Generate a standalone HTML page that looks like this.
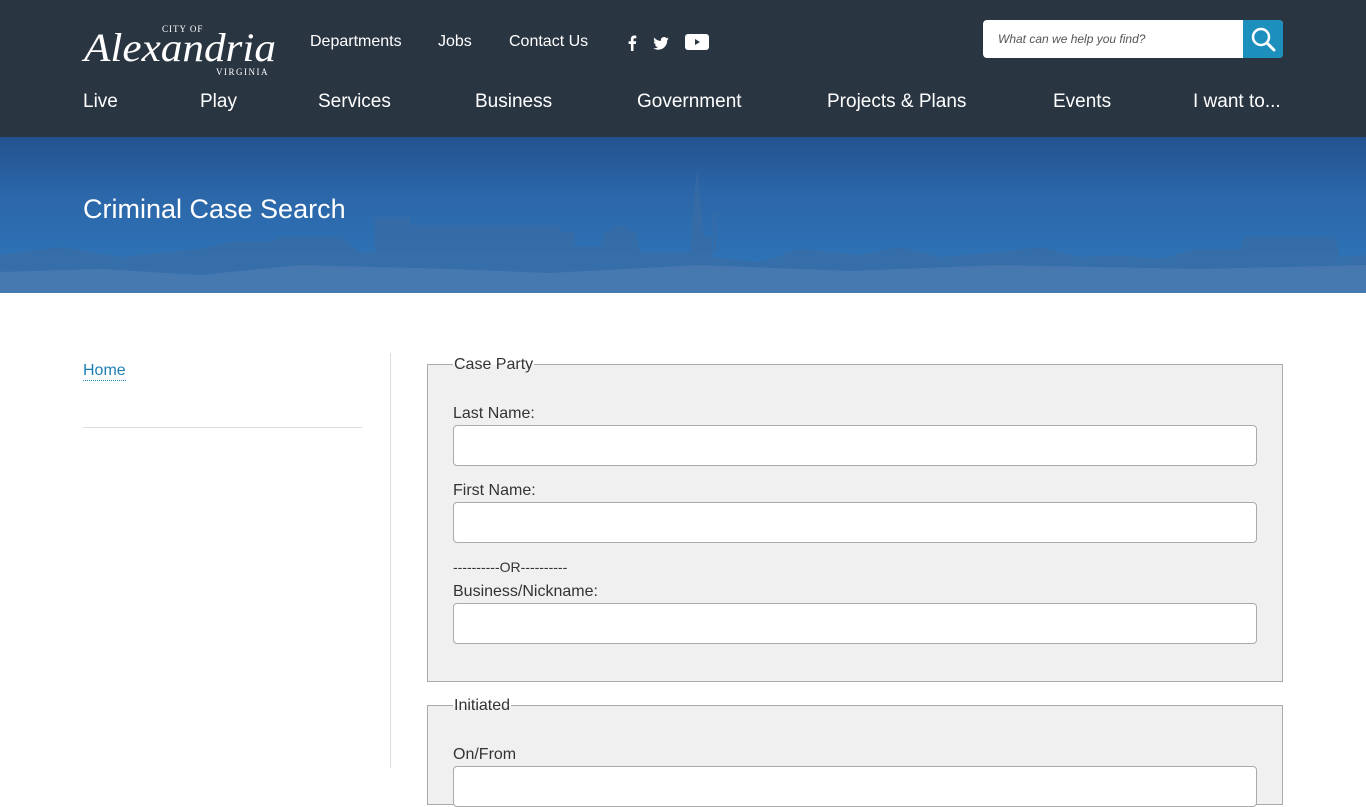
<!DOCTYPE html>
<html><head><meta charset="utf-8">
<style>
*{box-sizing:border-box;margin:0;padding:0}
body{width:1366px;height:768px;overflow:hidden;font-family:"Liberation Sans",sans-serif;background:#fff;color:#333}
.hdr{position:absolute;left:0;top:0;width:1366px;height:137px;background:#2a3542}
.logo{position:absolute;left:84px;top:10px;color:#fff;width:195px;height:68px}
.logo .main{font-family:"Liberation Serif",serif;font-style:italic;font-size:40px;position:absolute;left:0;top:14px;white-space:nowrap;transform:scaleX(1.08);transform-origin:left}
.logo .city{position:absolute;left:78px;top:14px;font-family:"Liberation Serif",serif;font-size:9px;letter-spacing:1px;white-space:nowrap}
.logo .va{position:absolute;left:132px;top:57px;font-family:"Liberation Serif",serif;font-size:9px;letter-spacing:1.5px;white-space:nowrap}
.top a{position:absolute;top:33px;color:#fff;font-size:16px;text-decoration:none}
.nav a{position:absolute;top:91px;color:#fff;font-size:19px;text-decoration:none}
.search{position:absolute;left:983px;top:20px;width:300px;height:38px;background:#fff;border-radius:4px;overflow:hidden}
.search span{position:absolute;left:15px;top:12px;font-size:12px;font-style:italic;color:#555}
.search .btn{position:absolute;right:0;top:0;width:40px;height:38px;background:#1d8fbd}
.banner{position:absolute;left:0;top:137px;width:1366px;height:156px;background:linear-gradient(180deg,#24528f 0%,#2b66a8 35%,#2f79bd 100%);overflow:hidden}
.banner h1{position:absolute;left:83px;top:57px;color:#fff;font-weight:normal;font-size:27px}
.side{position:absolute;left:83px;top:361px;font-size:16px;color:#1c7fb4;border-bottom:1px dotted #1c7fb4;line-height:19px}
.sline{position:absolute;left:83px;top:427px;width:279px;height:1px;background:#ddd}
.vline{position:absolute;left:390px;top:353px;width:1px;height:415px;background:#ddd}
.fs{position:absolute;left:427px;width:856px;background:#f0f0f0;border:1px solid #aaa}
.leg{position:absolute;left:25px;top:-9px;background:linear-gradient(#fff 50%,#f0f0f0 50%);font-size:16px;color:#333;padding:0 1px;line-height:18px}
.lab{position:absolute;left:25px;font-size:16px;color:#333}
.inp{position:absolute;left:25px;width:804px;height:41px;background:#fff;border:1px solid #aaa;border-radius:4px}
</style></head><body>
<div class="hdr">
  <div class="logo"><div class="city">CITY OF</div><div class="main">Alexandria</div><div class="va">VIRGINIA</div></div>
  <div class="top"><a style="left:310px">Departments</a><a style="left:438px">Jobs</a><a style="left:509px">Contact Us</a></div>
  <svg style="position:absolute;left:627px;top:35px" width="10" height="16" viewBox="0 0 10 16"><path d="M6.5 16V9h2.3l.4-2.8H6.5V4.5c0-.8.3-1.3 1.4-1.3H9.3V.7C9 .6 8.2.5 7.3.5 5.3.5 3.9 1.7 3.9 3.9v2.3H1.6V9h2.3v7z" fill="#fff"/></svg>
  <svg style="position:absolute;left:653px;top:37px" width="16" height="13" viewBox="0 0 24 20"><path d="M24 2.4c-.9.4-1.8.7-2.8.8 1-.6 1.8-1.6 2.2-2.7-1 .6-2 1-3.1 1.2C19.4.7 18.1 0 16.6 0c-2.7 0-4.9 2.2-4.9 4.9 0 .4 0 .8.1 1.1C7.7 5.8 4.1 3.9 1.7.9c-.4.7-.7 1.6-.7 2.5 0 1.7.9 3.2 2.2 4.1-.8 0-1.6-.2-2.2-.6v.1c0 2.4 1.7 4.4 3.9 4.8-.4.1-.8.2-1.3.2-.3 0-.6 0-.9-.1.6 2 2.4 3.4 4.6 3.4-1.7 1.3-3.8 2.1-6.1 2.1H0c2.2 1.4 4.8 2.2 7.5 2.2 9.1 0 14-7.5 14-14v-.6c1-.7 1.8-1.6 2.5-2.6z" fill="#fff"/></svg>
  <svg style="position:absolute;left:685px;top:34px" width="24" height="16" viewBox="0 0 24 16"><rect width="24" height="16" rx="3" fill="#fff"/><path d="M10 5v6l5-3z" fill="#2a3542"/></svg>
  <div class="search"><span>What can we help you find?</span><div class="btn"><svg width="40" height="38" viewBox="0 0 40 38"><circle cx="18" cy="17" r="8" fill="none" stroke="#fff" stroke-width="2.5"/><path d="M24 23l7 7" stroke="#fff" stroke-width="3" stroke-linecap="round"/></svg></div></div>
  <div class="nav"><a style="left:83px">Live</a><a style="left:200px">Play</a><a style="left:318px">Services</a><a style="left:475px">Business</a><a style="left:637px">Government</a><a style="left:827px">Projects &amp; Plans</a><a style="left:1053px">Events</a><a style="left:1193px">I want to...</a></div>
</div>
<div class="banner">
  <svg width="1366" height="156" style="position:absolute;left:0;top:0">
    <path fill="#3b6ca3" opacity=".65" d="M0 156L0 118L60 110L120 120L200 112L230 105L270 105L280 100L340 100L360 115L375 115L375 80L410 80L410 88L560 88L560 95L575 95L575 110L600 110L605 95L620 88L635 95L640 115L690 115L694 60L697 33L700 60L704 100L712 100L712 120L760 125L800 112L860 118L900 110L940 120L1000 115L1040 110L1080 120L1120 118L1160 122L1195 112L1240 112L1245 100L1335 100L1340 120L1366 118L1366 156Z"/>
    <rect x="713" y="75" width="3" height="40" fill="#3b6ca3" opacity=".65"/>
    <path fill="#5a86b5" opacity=".45" d="M0 156L0 135L100 132L200 138L300 128L450 132L550 136L700 128L850 134L1000 128L1200 132L1366 128L1366 156Z"/>
  </svg>
  <h1>Criminal Case Search</h1>
</div>
<div class="side">Home</div>
<div class="sline"></div>
<div class="vline"></div>
<div class="fs" style="top:364px;height:318px">
  <div class="leg">Case Party</div>
  <div class="lab" style="top:40px">Last Name:</div>
  <div class="inp" style="top:60px"></div>
  <div class="lab" style="top:117px">First Name:</div>
  <div class="inp" style="top:137px"></div>
  <div class="lab" style="top:194px;font-size:14px">----------OR----------</div>
  <div class="lab" style="top:218px">Business/Nickname:</div>
  <div class="inp" style="top:238px"></div>
</div>
<div class="fs" style="top:705px;height:100px">
  <div class="leg">Initiated</div>
  <div class="lab" style="top:40px">On/From</div>
  <div class="inp" style="top:60px"></div>
</div>
</body></html>
